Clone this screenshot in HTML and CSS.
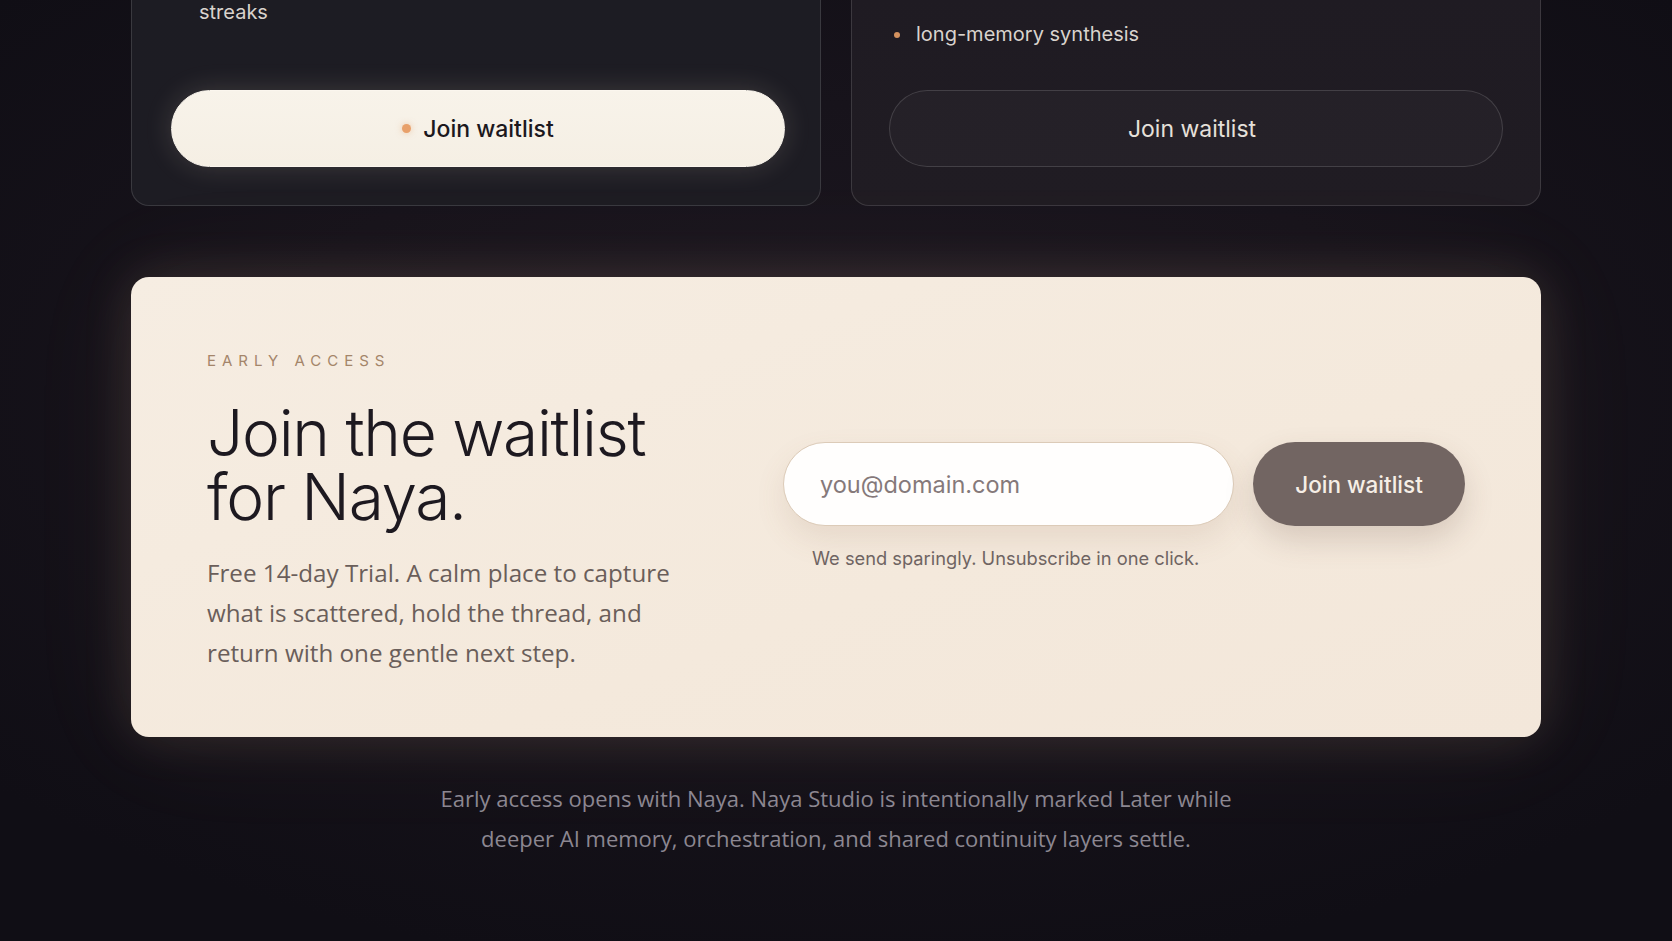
FILE: index.html
```html
<!DOCTYPE html>
<html lang="en">
<head>
<meta charset="utf-8">
<title>Naya — Early access</title>
<link rel="stylesheet" href="styles.css">
</head>
<body>
<main class="page">
  <section class="plans">
    <article class="plan plan-featured">
      <ul class="features features-tight">
        <li>gentle capture across notes and voice</li>
        <li>one calm next step each morning</li>
        <li>soft reminders, weekly reflection and kind<br>streaks</li>
      </ul>
      <button class="btn btn-light"><span class="btn-dot"></span>Join waitlist</button>
    </article>
    <article class="plan">
      <ul class="features">
        <li>everything in Naya</li>
        <li>shared continuity spaces</li>
        <li>orchestration across tools</li>
        <li>deeper AI memory layers</li>
        <li>long-memory synthesis</li>
      </ul>
      <button class="btn btn-ghost">Join waitlist</button>
    </article>
  </section>

  <section class="cta">
    <div class="cta-copy">
      <p class="eyebrow">Early access</p>
      <h2 class="cta-title">Join the waitlist<br>for Naya.</h2>
      <p class="cta-text">Free 14-day Trial. A calm place to capture what is scattered, hold the thread, and return with one gentle next step.</p>
    </div>
    <form class="cta-form">
      <div class="form-row">
        <input class="email" type="email" placeholder="you@domain.com">
        <button class="btn-submit" type="button">Join waitlist</button>
      </div>
      <p class="form-note">We send sparingly. Unsubscribe in one click.</p>
    </form>
  </section>

  <p class="footnote">Early access opens with Naya. Naya Studio is intentionally marked Later while<br>deeper AI memory, orchestration, and shared continuity layers settle.</p>
</main>
</body>
</html>
```

FILE: styles.css
```css
html, body {
  margin: 0;
  height: 100%;
}
body {
  overflow: hidden;
  background:
    radial-gradient(ellipse 68% 62% at 50% 42%, #1c1720 0%, #17131b 50%, #100e15 100%);
  font-family: Inter, "Liberation Sans", sans-serif;
  color: #e9e3dc;
}
.page {
  width: 1410px;
  margin: -238px auto 0;
  display: flex;
  flex-direction: column;
}

/* plan cards */
.plans {
  display: grid;
  grid-template-columns: 1fr 1fr;
  gap: 30px;
}
.plan {
  display: flex;
  flex-direction: column;
  justify-content: flex-end;
  padding: 40px 37px 38px;
  border: 1px solid rgba(255, 255, 255, 0.13);
  border-radius: 18px;
  background: linear-gradient(180deg, #1c1c23 0%, #1d1c23 100%);
}
.plan-featured {
  padding-left: 39px;
  padding-right: 35px;
}
.plan + .plan {
  background: linear-gradient(180deg, #1e1a22 0%, #201c23 100%);
}
.features {
  list-style: none;
  margin: 0 0 41px;
  padding: 0 0 0 27px;
  display: flex;
  flex-direction: column;
  gap: 24px;
  font-size: 20px;
  line-height: 30px;
  color: #d9d3cd;
}
.features-tight {
  margin-bottom: 63px;
  padding-left: 28px;
  gap: 11px;
}
.features li {
  position: relative;
}
.features li::before {
  content: "";
  position: absolute;
  left: -22px;
  top: 13px;
  width: 6px;
  height: 6px;
  border-radius: 50%;
  background: #d4925f;
}
.btn {
  height: 77px;
  border-radius: 39px;
  font-family: Inter, "Liberation Sans", sans-serif;
  font-size: 23px;
  font-weight: 500;
  display: flex;
  align-items: center;
  justify-content: center;
  gap: 12px;
  cursor: pointer;
}
.btn-light {
  background: linear-gradient(180deg, #f8f3ea 0%, #f5efe4 100%);
  border: 1px solid #fbf6ee;
  color: #1c181d;
  box-shadow: 0 0 28px rgba(245, 225, 200, 0.16);
}
.btn-dot {
  width: 9px;
  height: 9px;
  border-radius: 50%;
  background: #e8a06a;
  box-shadow: 0 0 6px rgba(232, 160, 106, 0.5);
}
.btn-ghost {
  padding-right: 14px;
  background: rgba(255, 255, 255, 0.025);
  border: 1px solid rgba(255, 255, 255, 0.14);
  color: #e6e0da;
  font-weight: 400;
}

/* CTA */
.cta {
  margin-top: 71px;
  height: 460px;
  box-sizing: border-box;
  padding: 74px 76px 64px;
  border-radius: 18px;
  background: linear-gradient(160deg, #f6ede2 0%, #f4e9dc 60%, #f3e7da 100%);
  box-shadow: 0 0 50px rgba(240, 200, 160, 0.14), 0 0 120px rgba(240, 200, 160, 0.06);
  display: grid;
  grid-template-columns: 1fr 682px;
  align-items: start;
  color: #1e1a1f;
}
.eyebrow {
  margin: 0;
  font-size: 15px;
  line-height: 20px;
  letter-spacing: 0.4em;
  text-transform: uppercase;
  color: #a4856a;
}
.cta-title {
  margin: 30px 0 24px;
  font-size: 64px;
  line-height: 64px;
  font-weight: 300;
  letter-spacing: -0.02em;
  color: #1d1920;
}
.cta-text {
  margin: 0;
  max-width: 490px;
  font-family: "Open Sans", "Noto Sans", sans-serif;
  font-size: 24.2px;
  line-height: 40px;
  color: #6a5e5a;
}
.cta-form {
  margin: 0 0 12px;
  align-self: center;
  display: flex;
  flex-direction: column;
}
.form-row {
  display: flex;
  gap: 19px;
}
.email {
  flex: 1;
  height: 84px;
  box-sizing: border-box;
  padding: 0 36px;
  border: 1px solid #dccbb8;
  border-radius: 42px;
  background: #fffefd;
  font-family: Inter, "Liberation Sans", sans-serif;
  font-size: 23.5px;
  color: #3a3236;
  box-shadow: 0 14px 30px rgba(140, 100, 70, 0.12);
  outline: none;
}
.email::placeholder {
  color: #85797a;
}
.btn-submit {
  width: 212px;
  height: 84px;
  border: none;
  border-radius: 42px;
  background: #726562;
  color: #f6eee6;
  font-family: Inter, "Liberation Sans", sans-serif;
  font-size: 22.5px;
  font-weight: 500;
  box-shadow: 0 14px 30px rgba(90, 60, 50, 0.18);
  cursor: pointer;
}
.form-note {
  margin: 20px 0 0 29px;
  font-size: 18.3px;
  line-height: 24px;
  color: #6f6462;
}

/* footnote */
.footnote {
  margin: 41px 0 0;
  text-align: center;
  font-family: "Open Sans", "Noto Sans", sans-serif;
  font-size: 22px;
  line-height: 40px;
  color: #8c8791;
}
```
